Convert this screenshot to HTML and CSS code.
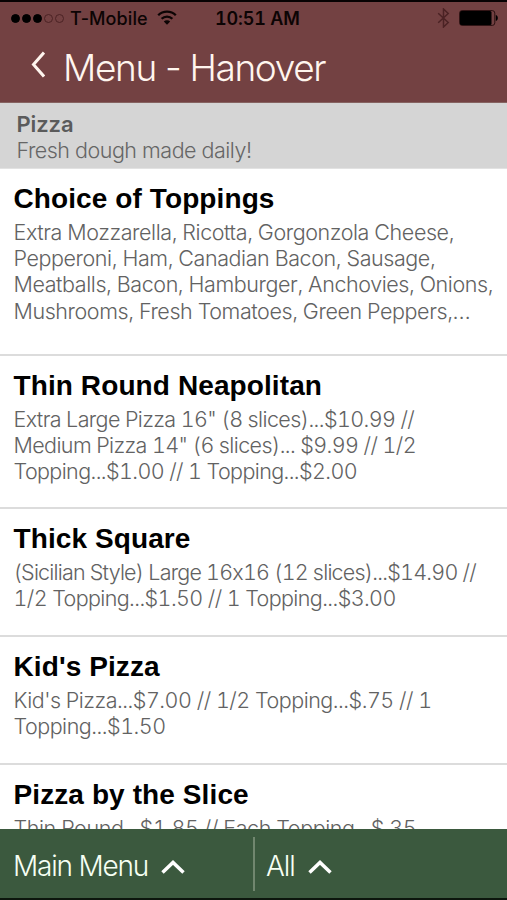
FILE: index.html
```
<!DOCTYPE html>
<html lang="en">
<head>
    <meta charset="UTF-8">
    <meta name="viewport" content="width=device-width, initial-scale=1.0">
    <title>Menu - Hanover</title>
    <link rel="stylesheet" href="styles.css">
</head>
<body>
    <div class="app">
        <header class="header">
            <div class="status-bar">
                <div class="status-left">
                    <div class="signal">
                        <span class="dot full"></span><span class="dot full"></span><span class="dot full"></span><span class="dot"></span><span class="dot"></span>
                    </div>
                    <span class="carrier">T-Mobile</span>
                    <svg class="wifi" width="20" height="16" viewBox="0 0 20 16">
                        <path d="M1.2 5.2a12.4 12.4 0 0 1 17.6 0M4.6 8.800a7.7 7.7 0 0 1 10.8 0" fill="none" stroke="#0c0404" stroke-width="2.3"/>
                        <path d="M10 14.700l-3.2-3.1a4.6 4.6 0 0 1 6.4 0z" fill="#0c0404"/>
                    </svg>
                </div>
                <span class="time">10:51 AM</span>
                <div class="status-right">
                    <svg width="13" height="20" viewBox="0 0 13 20">
                        <path d="M1.2 5.2l10 9.3L6.5 19V1l4.7 4.5-10 9.3" fill="none" stroke="#4b2224" stroke-width="1.5"/>
                    </svg>
                    <svg class="battery" width="40" height="16" viewBox="0 0 40 16">
                        <rect x="0.6" y="0.6" width="35.2" height="14.8" rx="2.5" fill="none" stroke="#2a1011" stroke-width="1"/>
                        <rect x="1" y="1" width="31.5" height="14" rx="1.5" fill="#000"/>
                        <path d="M36.8 5c1.6.4 2 1.700 2 3s-.4 2.600-2 3z" fill="#000"/>
                    </svg>
                </div>
            </div>
            <div class="title-bar">
                <svg class="back" width="14" height="28" viewBox="0 0 14 28">
                    <path d="M13 1.500L2.500 13.500l10.500 12" fill="none" stroke="#fff5ee" stroke-width="3"/>
                </svg>
                <h1>Menu - Hanover</h1>
            </div>
        </header>

        <div class="category">
            <h3>Pizza</h3>
            <p>Fresh dough made daily!</p>
        </div>

        <ul class="menu-list">
            <li class="item toppings">
                <h2>Choice of Toppings</h2>
                <p>Extra Mozzarella, Ricotta, Gorgonzola Cheese,<br>Pepperoni, Ham, Canadian Bacon, Sausage,<br>Meatballs, Bacon, Hamburger, Anchovies, Onions,<br>Mushrooms, Fresh Tomatoes, Green Peppers,…</p>
            </li>
            <li class="item neapolitan">
                <h2>Thin Round Neapolitan</h2>
                <p>Extra Large Pizza 16" (8 slices)...$10.99 //<br>Medium Pizza 14" (6 slices)... $9.99 // 1/2<br>Topping...$1.00 // 1 Topping...$2.00</p>
            </li>
            <li class="item square">
                <h2>Thick Square</h2>
                <p><span class="tight">(Sicilian Style) Large 16x16 (12 slices)...$14.90 //</span><br>1/2 Topping...$1.50 // 1 Topping...$3.00</p>
            </li>
            <li class="item kids">
                <h2>Kid's Pizza</h2>
                <p>Kid's Pizza...$7.00 // 1/2 Topping...$.75 // 1<br>Topping...$1.50</p>
            </li>
            <li class="item slice">
                <h2>Pizza by the Slice</h2>
                <p>Thin Round...$1.85 // Each Topping...$.35</p>
            </li>
        </ul>

        <footer class="footer">
            <div class="tab main-menu">
                <span>Main Menu</span>
                <svg width="24" height="16" viewBox="0 0 24 16">
                    <path d="M1.500 13.500L12 3.500l10.500 10" fill="none" stroke="#fff" stroke-width="3.500"/>
                </svg>
            </div>
            <div class="tab all">
                <span>All</span>
                <svg width="24" height="16" viewBox="0 0 24 16">
                    <path d="M1.500 13.500L12 3.500l10.500 10" fill="none" stroke="#fff" stroke-width="3.500"/>
                </svg>
            </div>
        </footer>
    </div>
</body>
</html>
```
FILE: styles.css
```
* {
    padding: 0;
    margin: 0;
    box-sizing: border-box;
}
body {
    background: #fff;
    font-family: Inter, "Liberation Sans", sans-serif;
    font-weight: 300;
}
.app {
    display: flex;
    flex-direction: column;
    height: 900px;
    overflow: hidden;
}
.header {
    height: 103px;
    flex-shrink: 0;
    background: #734142;
    border-top: 2px solid #080203;
    border-bottom: 1px solid #866361;
}
.status-bar {
    display: grid;
    grid-template-columns: 215px 1fr auto;
    align-items: center;
    height: 32px;
    padding-right: 8px;
    color: #0c0404;
    white-space: nowrap;
}
.status-left, .status-right, .signal {
    display: flex;
    align-items: center;
}
.status-left {
    padding-left: 11px;
}
.signal {
    gap: 2px;
}
.dot {
    width: 9px;
    height: 9px;
    border: 1px solid #4b2224;
    border-radius: 50%;
}
.dot.full {
    background: #000;
    border-color: #000;
}
.carrier {
    width: 78px;
    margin-left: 6px;
    font-size: 18px;
    font-weight: 500;
    letter-spacing: 0.1px;
}
.wifi {
    margin-left: 9px;
}
.time {
    font-size: 18px;
    font-weight: 600;
    font-variant-numeric: tabular-nums;
    letter-spacing: -0.15px;
}
.status-right {
    gap: 9px;
}
.title-bar {
    display: flex;
    align-items: center;
    height: 66px;
    padding-left: 31px;
    color: #fff5ee;
}
.title-bar h1 {
    margin-left: 18px;
    font-size: 37px;
    font-weight: 300;
    letter-spacing: -1.35px;
    white-space: nowrap;
}
.back {
    margin-top: -4px;
}
.category {
    height: 66px;
    flex-shrink: 0;
    padding: 8px 16.5px 0;
    background: #d5d5d5;
    border-bottom: 1px solid #e2e2e2;
    color: #666;
}
.category h3 {
    font-size: 22px;
    font-weight: 600;
    line-height: 26px;
    letter-spacing: -0.1px;
    color: #5b5b5b;
}
.category p {
    font-size: 21.5px;
    line-height: 26px;
    letter-spacing: -0.5px;
}
.menu-list {
    flex: 1;
    min-height: 0;
    overflow: hidden;
    list-style: none;
}
.item {
    padding: 12px 13.5px 0;
    border-bottom: 2px solid #dcdcdc;
    white-space: nowrap;
}
.item h2 {
    height: 38px;
    font-family: "Liberation Sans", Arial, sans-serif;
    font-size: 28px;
    font-weight: bold;
    line-height: 36px;
    letter-spacing: 0.1px;
    color: #000;
}
.item p {
    font-size: 21.5px;
    line-height: 26.2px;
    letter-spacing: -0.42px;
    font-variant-numeric: tabular-nums;
    color: #626262;
}
.toppings {
    height: 187px;
}
.neapolitan {
    height: 153px;
}
.neapolitan p, .square p {
    letter-spacing: -0.61px;
}
.square .tight {
    letter-spacing: -0.8px;
}
.kids p {
    letter-spacing: -0.5px;
}
.square, .kids {
    height: 128px;
}
.footer {
    display: flex;
    height: 71px;
    flex-shrink: 0;
    background: #3b593e;
    border-bottom: 2px solid #0c160d;
    color: #f6fff3;
}
.tab {
    display: flex;
    align-items: center;
    height: 54px;
    margin-top: 8px;
    font-size: 28px;
    white-space: nowrap;
}
.tab span {
    padding-top: 4px;
}
.tab svg {
    margin-top: 5px;
    margin-left: 13px;
}
.main-menu {
    width: 255px;
    padding-left: 13px;
    border-right: 2px solid #71876f;
    letter-spacing: -1.2px;
}
.all {
    padding-left: 11px;
    letter-spacing: -1.1px;
}
```
